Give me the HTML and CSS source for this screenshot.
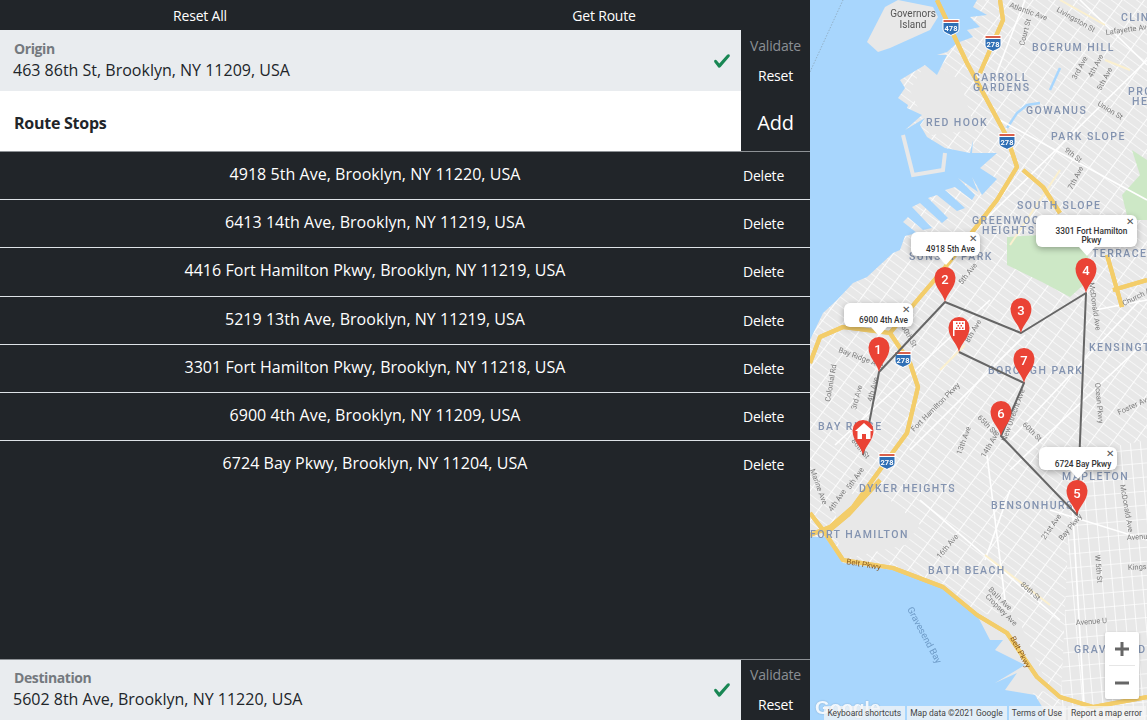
FILE: index.html
```html
<!DOCTYPE html>
<html lang="en">
<head>
<meta charset="utf-8">
<title>Route Planner</title>
<link rel="stylesheet" href="styles.css">
</head>
<body>
<div class="app">
  <section class="panel">
    <div class="topbar">
      <button class="btn top-btn">Reset All</button>
      <button class="btn top-btn">Get Route</button>
    </div>
    <div class="addr-row">
      <div class="addr-box">
        <div class="addr-text"><div class="addr-label">Origin</div><div class="addr-value">463 86th St, Brooklyn, NY 11209, USA</div></div>
        <svg class="check" viewBox="0 0 8 8"><path d="M2.3 6.73L.6 4.53c-.4-1.04.46-1.4 1.1-.8l1.1 1.4 3.4-3.8c.6-.63 1.6-.27 1.2.7l-4 4.6c-.43.5-.8.4-1.1.1z"/></svg>
      </div>
      <div class="addr-actions"><button class="btn muted">Validate</button><button class="btn">Reset</button></div>
    </div>
    <div class="stops-head">
      <div class="stops-title">Route Stops</div>
      <button class="btn add">Add</button>
    </div>
    <ul class="stops">
      <li class="stop"><span class="stop-text">4918 5th Ave, Brooklyn, NY 11220, USA</span><button class="btn del">Delete</button></li>
      <li class="stop"><span class="stop-text">6413 14th Ave, Brooklyn, NY 11219, USA</span><button class="btn del">Delete</button></li>
      <li class="stop"><span class="stop-text">4416 Fort Hamilton Pkwy, Brooklyn, NY 11219, USA</span><button class="btn del">Delete</button></li>
      <li class="stop"><span class="stop-text">5219 13th Ave, Brooklyn, NY 11219, USA</span><button class="btn del">Delete</button></li>
      <li class="stop"><span class="stop-text">3301 Fort Hamilton Pkwy, Brooklyn, NY 11218, USA</span><button class="btn del">Delete</button></li>
      <li class="stop"><span class="stop-text">6900 4th Ave, Brooklyn, NY 11209, USA</span><button class="btn del">Delete</button></li>
      <li class="stop last"><span class="stop-text">6724 Bay Pkwy, Brooklyn, NY 11204, USA</span><button class="btn del">Delete</button></li>
    </ul>
    <div class="addr-row dest">
      <div class="addr-box">
        <div class="addr-text"><div class="addr-label">Destination</div><div class="addr-value">5602 8th Ave, Brooklyn, NY 11220, USA</div></div>
        <svg class="check" viewBox="0 0 8 8"><path d="M2.3 6.73L.6 4.53c-.4-1.04.46-1.4 1.1-.8l1.1 1.4 3.4-3.8c.6-.63 1.6-.27 1.2.7l-4 4.6c-.43.5-.8.4-1.1.1z"/></svg>
      </div>
      <div class="addr-actions"><button class="btn muted">Validate</button><button class="btn">Reset</button></div>
    </div>
  </section>

  <section class="map">
    <svg class="map-canvas" viewBox="0 0 337 720" width="337" height="720">
      <defs>
        <pattern id="gridA" width="18" height="7.4" patternUnits="userSpaceOnUse" patternTransform="rotate(36)">
          <path d="M0 .5H18" stroke="#fff" stroke-width=".7"/><path d="M.5 0V7.4" stroke="#fff" stroke-width="1"/>
        </pattern>
        <pattern id="gridB" width="10" height="14" patternUnits="userSpaceOnUse" patternTransform="rotate(-5)">
          <path d="M0 .5H10" stroke="#fff" stroke-width=".7"/><path d="M.5 0V14" stroke="#fff" stroke-width=".8"/>
        </pattern>
        <g id="pin"><path d="M0 0C-2-9-10.500-14-10.500-24.500A10.500 10.500 0 0 1 10.500-24.500C10.500-14 2-9 0 0Z" fill="#ea4335"/></g>
        <g id="shield">
          <path d="M-8.500-8H8.500V2C8.500 6 3 7 0 9C-3 7-8.500 6-8.500 2Z" fill="#fff"/>
          <path d="M-7.500-4H7.500V2C7.500 5.500 3 6 0 8C-3 6-7.500 5.500-7.500 2Z" fill="#2f6fb5"/>
          <path d="M-7.500-7H7.500V-5H-7.500Z" fill="#d9604c"/>
        </g>
      </defs>
      <rect class="land" width="337" height="720"/>
      <rect class="streets" width="337" height="720" fill="url(#gridA)"/>
      <path d="M262 455L337 440V720H250Z" class="land"/>
      <path d="M262 455L337 440V720H250Z" fill="url(#gridB)"/>
      <path class="land" d="M24 495L70 492L110 525L95 545L30 560Z"/>
      <path class="land" d="M167 615L205 612L240 690L190 700Z"/>
      <path class="land" d="M118 60L150 80L165 130L120 135L100 90Z"/>
      <path class="park" d="M197 237L230 235L265 215L278 245L279 280L260 297L232 282L197 265Z"/>
      <path class="park" d="M322 150L330 175L312 195L318 220L337 220V160Z"/>
      <path class="water" d="M0 0H167L163 7L177 15L160 17L170 27L157 30L163 37L147 43L137 52L127 55L137 55L127 75L115 65L90 80L95 88L88 98L98 105L97 108L112 115L95 130L115 118L110 125L117 137L135 148L160 153L163 140L162 153L187 153L170 168L187 179L172 195L162 177L168 192L148 178L165 195L162 200L145 187L135 190L155 208L147 211L127 195L118 198L138 218L132 223L110 203L102 207L122 228L113 230L98 217L93 222L107 233L95 236L90 250L83 253L57 277L43 283L27 300L13 313L0 340Z"/>
      <path class="water" d="M0 537L15 537L33 563L83 570L133 587L167 615L180 640L193 640L185 650L215 665L185 683L207 673L195 690L225 695L240 720H0Z"/>
      <path class="land" d="M57 42L68 52L80 48L120 30L128 17L123 7L88 0L75 7Z"/>
      <path class="ferry" d="M0 72L33 0"/>
      <polyline class="pier" points="93,135 103,175 133,170 135,153"/>
      <polyline class="canal" points="197,128 207,113 217,105 230,103"/>
      <polyline class="canal" points="240,90 250,68"/>
      <g class="major">
        <path d="M175 220L337 60"/><path d="M190 120L337 200"/><path d="M215 0L180 90"/><path d="M270 0L337 65"/>
        <path d="M337 340L200 470"/><path d="M200 440L330 300"/><path d="M25 445L180 300"/><path d="M100 450L215 335"/><path d="M177 455L195 600"/>
        <path d="M262 500L275 720"/><path d="M200 490L175 560"/><path d="M110 500L250 620"/><path d="M240 510L337 540"/><path d="M285 310L337 300"/>
      </g>
      <g class="gold">
        <path d="M200 245L250 170"/><path d="M175 555L240 605"/><path d="M130 370L155 345"/><path d="M250 0L295 25"/><path d="M295 60L320 70"/>
      </g>
      <g class="hwy-edge">
        <path id="h1" d="M127 0L157 63L197 137L207 167L187 200L133 270L110 297L80 333L33 327L10 337L0 363"/>
        <path id="h2" d="M190 0L193 20L170 73"/>
        <path id="h3" d="M213 170L233 187L250 213"/>
        <path id="h4" d="M80 333L100 363L108 387L97 433L72 467L43 507L20 527L0 535"/>
        <path id="h7" d="M70 480L38 515L20 530"/>
        <path id="h5" d="M0 513L13 530L33 560L83 568L133 587L167 615L197 633L227 677L250 697L283 707L337 697"/>
        <path id="h6" d="M297 255L312 307M303 290L337 280"/>
      </g>
      <g class="hwy">
        <use href="#h1"/><use href="#h2"/><use href="#h3"/><use href="#h4"/><use href="#h7"/><use href="#h5"/><use href="#h6"/>
      </g>

      <g class="hood">
        <text x="163" y="81">CARROLL</text>
        <text x="163" y="91">GARDENS</text>
        <text x="116" y="126">RED HOOK</text>
        <text x="216" y="114">GOWANUS</text>
        <text x="222" y="51">BOERUM HILL</text>
        <text x="311" y="21">CLINTON</text>
        <text x="318" y="95">PRO</text><text x="322" y="105">HE</text>
        <text x="241" y="140">PARK SLOPE</text>
        <text x="207" y="209">SOUTH SLOPE</text>
        <text x="162" y="224">GREENWOOD</text><text x="172" y="234">HEIGHTS</text>
        <text x="99" y="260">SUNSET PARK</text>
        <text x="282" y="257">TERRACE</text>
        <text x="279" y="351">KENSINGTON</text>
        <text x="178" y="374">BOROUGH PARK</text>
        <text x="8" y="430">BAY RIDGE</text>
        <text x="49" y="492">DYKER HEIGHTS</text>
        <text x="181" y="509">BENSONHURST</text>
        <text x="252" y="480">MAPLETON</text>
        <text x="0" y="538">FORT HAMILTON</text>
        <text x="118" y="574">BATH BEACH</text>
        <text x="264" y="653">GRAVESEND</text>
      </g>
      <g class="isle"><text x="103" y="17">Governors</text><text x="103" y="28">Island</text></g>
      <g class="street">
        <text transform="translate(199 7) rotate(20)">Atlantic Ave</text>
        <text transform="translate(246 11) rotate(30)">Livingston St</text>
        <text transform="translate(296 35) rotate(-8)">Lafayette Ave</text>
        <text transform="translate(214 46) rotate(-75)">Court St</text>
        <text transform="translate(266 80) rotate(-62)">3rd Ave</text>
        <text transform="translate(282 78) rotate(-62)">4th Ave</text>
        <text transform="translate(291 91) rotate(-62)">5th Ave</text>
        <text transform="translate(287 105) rotate(32)">Union St</text>
        <text transform="translate(254 151) rotate(38)">9th St</text>
        <text transform="translate(262 190) rotate(-62)">7th Ave</text>
        <text transform="translate(152 285) rotate(-52)">5th Ave</text>
        <text transform="translate(159 343) rotate(-60)">8th Ave</text>
        <text transform="translate(91 327) rotate(60)">60th St</text>
        <text transform="translate(28 352) rotate(20)">Bay Ridge Ave</text>
        <text transform="translate(20 402) rotate(-80)">Colonial Rd</text>
        <text transform="translate(46 410) rotate(-75)">3rd Ave</text>
        <text transform="translate(62 402) rotate(-75)">4th Ave</text>
        <text transform="translate(104 432) rotate(-45)">Fort Hamilton Pkwy</text>
        <text transform="translate(167 418) rotate(45)">65th St</text>
        <text transform="translate(212 425) rotate(45)">60th St</text>
        <text transform="translate(151 455) rotate(-70)">13th Ave</text>
        <text transform="translate(175 458) rotate(-60)">14th Ave</text>
        <text transform="translate(196 442) rotate(-70)">New Utrecht Ave</text>
        <text transform="translate(285 383) rotate(85)">Ocean Pkwy</text>
        <text transform="translate(309 415) rotate(-25)">Foster Ave</text>
        <text transform="translate(279 283) rotate(82)">McDonald Ave</text>
        <text transform="translate(314 306) rotate(-27)">Church Ave</text>
        <text transform="translate(41 441) rotate(50)">86th St</text>
        <text transform="translate(0 470) rotate(70)">Marine Ave</text>
        <text transform="translate(40 490) rotate(-55)">5th Ave</text>
        <text transform="translate(22 512) rotate(-55)">4th Ave</text>
        <text transform="translate(130 559) rotate(-50)">16th Ave</text>
        <text transform="translate(235 540) rotate(-55)">21st Ave</text>
        <text transform="translate(252 541) rotate(-50)">Bay Pkwy</text>
        <text transform="translate(285 555) rotate(85)">W 5th St</text>
        <text transform="translate(310 485) rotate(80)">McDonald Ave</text>
        <text transform="translate(317 540) rotate(-3)">Avenue P</text>
        <text transform="translate(318 570) rotate(-3)">Kings Hwy</text>
        <text transform="translate(266 625) rotate(-4)">Avenue U</text>
        <text transform="translate(210 585) rotate(42)">86th St</text>
        <text transform="translate(178 590) rotate(45)">Bath Ave</text>
        <text transform="translate(175 597) rotate(45)">Cropsey Ave</text>
      </g>
      <text class="bay" transform="translate(97 609) rotate(62)">Gravesend Bay</text>
      <g class="brown">
        <text transform="translate(36 564) rotate(10)">Belt Pkwy</text>
        <text transform="translate(200 638) rotate(62)">Belt Pkwy</text>
      </g>
      <g class="shields">
        <use href="#shield" x="141" y="27"/><text x="141" y="31">478</text>
        <use href="#shield" x="183" y="43"/><text x="183" y="47">278</text>
        <use href="#shield" x="197" y="141"/><text x="197" y="145">278</text>
        <use href="#shield" x="93" y="359"/><text x="93" y="363">278</text>
        <use href="#shield" x="77" y="461"/><text x="77" y="465">278</text>
      </g>

      <polyline class="route" points="53,455 69,372 135,302 211,333 276,293 267,515 191,436 214,383 149,352"/>

      <g class="pins">
        <use href="#pin" x="69" y="372"/><text x="68" y="354">1</text>
        <use href="#pin" x="135" y="302"/><text x="135" y="284">2</text>
        <use href="#pin" x="211" y="333"/><text x="211" y="315">3</text>
        <use href="#pin" x="276" y="293"/><text x="276" y="275">4</text>
        <use href="#pin" x="267" y="515"/><text x="267" y="498">5</text>
        <use href="#pin" x="191" y="436"/><text x="191" y="418">6</text>
        <use href="#pin" x="214" y="383"/><text x="214" y="365">7</text>
        <use href="#pin" x="149" y="352"/>
        <use href="#pin" x="53" y="455"/>
      </g>
      <path class="glyph" d="M143 321V336H144.500V330H155V321Z"/>
      <path class="flag-check" d="M146 322.500h1.500v1.500h-1.500zM149 322.500h1.500v1.500h-1.500zM152 322.500h1.500v1.500h-1.500zM147.500 325h1.500v1.500h-1.500zM150.500 325h1.500v1.500h-1.500zM146 327.500h1.500v1.500h-1.500zM149 327.500h1.500v1.500h-1.500zM152 327.500h1.500v1.500h-1.500z"/>
      <path class="glyph" d="M54 423L45 431H47.500V439H52V434H56V439H60.500V431H63Z"/>
    </svg>

    <div class="iw iw-a"><span class="iw-x">✕</span>6900 4th Ave</div>
    <div class="iw iw-b"><span class="iw-x">✕</span>4918 5th Ave</div>
    <div class="iw iw-c"><span class="iw-x">✕</span>3301 Fort Hamilton Pkwy</div>
    <div class="iw iw-d"><span class="iw-x">✕</span>6724 Bay Pkwy</div>

    <div class="zoom-ctl">
      <div class="zoom-btn"><svg viewBox="0 0 16 16"><path d="M6.500 1H9.500V6.500H15V9.500H9.500V15H6.500V9.500H1V6.500H6.500Z"/></svg></div>
      <div class="zoom-sep"></div>
      <div class="zoom-btn"><svg viewBox="0 0 16 16"><path d="M1 6.500H15V9.500H1Z"/></svg></div>
    </div>
    <div class="logo">Google</div>
    <div class="attrib"><span>Keyboard shortcuts</span><span>Map data ©2021 Google</span><span>Terms of Use</span><span>Report a map error</span></div>
  </section>
</div>
</body>
</html>
```
FILE: styles.css
```css
* { box-sizing: border-box; }
html, body { margin: 0; height: 100%; overflow: hidden; }
body { font-family: "Open Sans", "Noto Sans", sans-serif; background: #212529; color: #fff; }
.app { display: flex; width: 1147px; height: 720px; }
.panel { width: 810px; height: 720px; display: flex; flex-direction: column; background: #212529; }
.btn { background: none; border: 0; padding: 0; margin: 0; color: #fff; font: inherit; font-size: 14px; letter-spacing: -.18px; cursor: pointer; }
.topbar { height: 30px; flex: none; display: grid; grid-template-columns: 400px 408px; }
.top-btn { height: 30px; }
.addr-row { height: 61px; flex: none; display: flex; }
.addr-box { width: 741px; background: #e9ecef; display: flex; align-items: center; padding: 0 10px 0 13px; color: #212529; }
.addr-text { flex: 1; margin-top: -1px; }
.addr-label { font-size: 14px; font-weight: 700; color: #74797e; line-height: 20px; letter-spacing: -.4px; margin-left: 1px; }
.addr-value { font-size: 16px; line-height: 22px; }
.check { width: 18px; height: 18px; fill: #198754; }
.addr-actions { width: 69px; display: flex; flex-direction: column; }
.addr-actions .btn { height: 30px; }
.muted { color: #8b8f94; }
.stops-head { height: 61px; flex: none; display: flex; border-bottom: 1px solid #8d9195; }
.stops-title { width: 741px; background: #fff; color: #212529; font-size: 16px; font-weight: 700; letter-spacing: -.25px; padding: 2px 0 0 14px; line-height: 60px; }
.add { flex: 1; font-size: 20px; padding-top: 2px; }
.stops { flex: 1; list-style: none; margin: 0; padding: 0; }
.stop { height: 48.200px; display: flex; border-bottom: 1px solid #dee2e6; }
.stop.last { border-bottom: 0; }
.stop-text { width: 750px; text-align: center; font-size: 16px; letter-spacing: .04px; line-height: 44px; }
.del { width: 27px; flex: none; white-space: nowrap; display: flex; justify-content: center; align-items: center; height: 47px; }
.dest { border-top: 1px solid #8d9195; }
.dest .addr-text { margin-top: -2px; }
.dest .addr-actions { margin-top: -1px; }

.map { width: 337px; height: 720px; position: relative; overflow: hidden; background: #e8e8e8; font-family: Roboto, sans-serif; }
.map-canvas { display: block; filter: blur(.35px); }
.land { fill: #e8e8e8; }
.streets { opacity: .9; }
.park { fill: #cde8c6; }
.water { fill: #a8d6fd; }
.ferry { fill: none; stroke: #8aa0b0; stroke-width: .7; stroke-dasharray: 1.500 1.500; }
.pier { fill: none; stroke: #e8e8e8; stroke-width: 4; }
.canal { fill: none; stroke: #a8d6fd; stroke-width: 2.500; }
.major path { fill: none; stroke: #fff; stroke-width: 1.600; }
.gold path { fill: none; stroke: #fbf0cf; stroke-width: 2; }
.hwy-edge path { fill: none; stroke: #f3cd6a; stroke-width: 4.200; stroke-linejoin: round; }
.hwy use { fill: none; stroke: #fddc80; stroke-width: 2.800; stroke-linejoin: round; }
.hood text { fill: #8393b0; font-size: 10.500px; font-weight: 500; letter-spacing: 1.450px; }
.isle text { fill: #555; font-size: 10px; text-anchor: middle; }
.street text { fill: #7d7d7d; font-size: 7.500px; }
.bay { fill: #6e9bc7; font-size: 9.500px; }
.brown text { fill: #8a5a20; font-size: 8px; }
.shields text { fill: #fff; font-size: 7.500px; font-weight: 700; text-anchor: middle; }
.route { fill: none; stroke: #666; stroke-width: 2; stroke-linejoin: round; }
.pins text { fill: #fff; font-size: 13px; text-anchor: middle; font-weight: 500; }
.glyph { fill: #fff; }
.flag-check { fill: #ea4335; }

.iw { position: absolute; background: #fff; border-radius: 6px; box-shadow: 0 2px 6px rgba(0,0,0,.3); color: #333; font-size: 8.300px; font-weight: 500; text-align: center; line-height: 9px; padding: 13px 0 0 10px; }
.iw::after { content: ""; position: absolute; left: 50%; bottom: -9px; margin-left: -8px; border-left: 8px solid transparent; border-right: 8px solid transparent; border-top: 9px solid #fff; }
.iw-x { position: absolute; top: 2px; right: 3px; font-size: 10px; line-height: 10px; color: #555; font-weight: 400; }
.iw-a { left: 34px; top: 303px; width: 69px; height: 24px; }
.iw-b { left: 101px; top: 232px; width: 69px; height: 24px; }
.iw-c { left: 226px; top: 215px; width: 101px; height: 32px; padding: 12px 4px 0 14px; }
.iw-d { left: 229px; top: 447px; width: 78px; height: 23px; }

.zoom-ctl { position: absolute; left: 295px; top: 632px; width: 34px; height: 67px; background: #fff; box-shadow: 0 1px 3px rgba(0,0,0,.25); display: flex; flex-direction: column; border-radius: 2px; }
.zoom-btn { flex: 1; display: flex; align-items: center; justify-content: center; }
.zoom-btn svg { width: 16px; height: 16px; fill: #666; }
.zoom-sep { height: 1px; margin: 0 4px; background: #e6e6e6; }
.logo { position: absolute; left: 5px; top: 697px; font-family: "Liberation Sans", sans-serif; font-size: 19px; font-weight: 700; color: #fff; opacity: .85; text-shadow: 0 0 2px rgba(0,0,0,.25); }
.attrib { position: absolute; right: 1px; bottom: 0; height: 14px; display: flex; gap: 2px; }
.attrib span { background: rgba(245,245,245,.75); color: #444; font-size: 8.500px; line-height: 14px; padding: 0 4px 0 3px; white-space: nowrap; }
```
